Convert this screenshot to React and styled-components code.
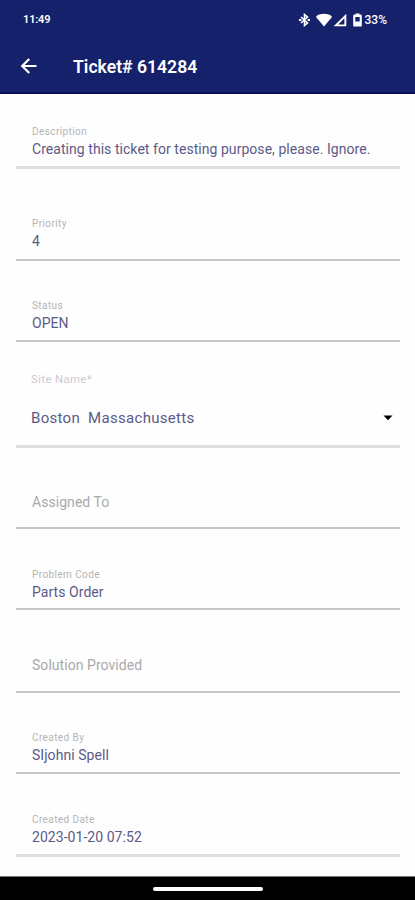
import React from "react";
import styled, { createGlobalStyle } from "styled-components";

const GlobalStyle = createGlobalStyle`
  * { box-sizing: border-box; }
  body { margin: 0; background: #fefefe; font-family: Roboto, "Liberation Sans", sans-serif; }
`;

const Screen = styled.div`
  width: 415px;
  height: 900px;
  display: flex;
  flex-direction: column;
  overflow: hidden;
  background: #fefefe;
`;

const Header = styled.header`
  height: 94px;
  flex: none;
  background: #16216c;
  border-bottom: 2px solid #08105a;
  color: #fff;
`;

const StatusBar = styled.div`
  height: 39px;
  padding: 0 28px 0 23px;
  display: flex;
  align-items: center;
  justify-content: space-between;
  font-size: 11px;
  font-weight: 600;
`;

const Clock = styled.span`
  letter-spacing: -0.15px;
`;

const StatusIcons = styled.div`
  display: flex;
  align-items: center;
  svg { display: block; }
`;

const Percent = styled.span`
  margin-left: 3px;
  font-size: 12px;
  font-weight: 500;
`;

const TitleBar = styled.div`
  height: 54px;
  padding: 0 0 0 20px;
  display: flex;
  align-items: center;
`;

const BackButton = styled.button`
  width: 18px;
  height: 18px;
  padding: 0;
  border: 0;
  background: none;
  color: #fff;
  svg { display: block; }
`;

const Title = styled.h1`
  margin: 2px 0 0 35px;
  font-size: 17.6px;
  font-weight: 600;
  line-height: 24px;
`;

const Form = styled.main`
  flex: 1;
  padding: 0 15px 0 16px;
`;

const Field = styled.div`
  height: ${(p) => p.$height}px;
  padding: 0 0 ${(p) => p.$gap ?? 8}px 16px;
  display: flex;
  flex-direction: column;
  justify-content: flex-end;
  border-bottom: ${(p) => (p.$soft ? "3px solid #dedede" : "2px solid #c6c6c6")};
`;

const Label = styled.label`
  font-size: 10px;
  line-height: 17px;
  letter-spacing: 0.41px;
  color: #b4b4b6;
`;

const Value = styled.div`
  font-size: 14px;
  line-height: 18px;
  letter-spacing: ${(p) => p.$spacing ?? 0.05}px;
  white-space: pre;
  color: #5c5a88;
`;

const Placeholder = styled(Value)`
  color: #a9a9ab;
`;

const SelectLabel = styled(Label)`
  font-size: 11.3px;
  margin: 0 0 20px -1px;
  color: #cbcbcd;
`;

const SelectRow = styled.div`
  display: flex;
  align-items: center;
  justify-content: space-between;
  margin-left: -1px;
  padding-right: 7px;
  ${Value} { font-size: 15px; line-height: 20px; }
`;

const NavBar = styled.footer`
  height: 24px;
  flex: none;
  display: flex;
  justify-content: center;
  align-items: center;
  background: #000;
  border-top: 1px solid #777;
`;

const HomePill = styled.div`
  width: 110px;
  height: 4px;
  border-radius: 2px;
  background: #fff;
`;

const Bluetooth = () => (
  <svg width="13" height="14" viewBox="0 0 13 14" fill="none" stroke="#fff" strokeWidth="1.6">
    <path d="M3 4L9.5 10L6.5 12.5V1.5L9.5 4L3 10" />
    <path d="M1 7h2.4M9.6 7H12" strokeWidth="2" />
  </svg>
);

const Wifi = () => (
  <svg width="16" height="14" viewBox="0 0 16 14" fill="#fff">
    <path d="M0.2 3.4C2.5 0 13.5 0 15.8 3.4Q15.9 4.4 15.2 5L8 13.4L.8 5Q.1 4.4 .2 3.4Z" />
  </svg>
);

const Signal = () => (
  <svg width="14" height="14" viewBox="0 0 14 14">
    <path d="M.7 13.3H13.3V.7ZM11.4 11.4H5.2L11.4 5.2Z" fill="#fff" fillRule="evenodd" />
  </svg>
);

const Battery = () => (
  <svg width="9" height="14" viewBox="0 0 9 14">
    <path
      d="M2.6.5H6.4V1.6H7.6Q8.8 1.6 8.8 2.8V12.4Q8.8 13.6 7.6 13.6H1.4Q.2 13.6 .2 12.4V2.8Q.2 1.6 1.4 1.6H2.6ZM2.3 4V8.5H6.7V4Z"
      fill="#fff"
      fillRule="evenodd"
    />
  </svg>
);

const Spacer = styled.span`
  width: ${(p) => p.$w}px;
`;

const fields = [
  { label: "Description", value: "Creating this ticket for testing purpose, please. Ignore.", height: 75, soft: true },
  { label: "Priority", value: "4", height: 92, gap: 9 },
  { label: "Status", value: "OPEN", height: 81 },
  { select: true, label: "Site Name*", value: "Boston  Massachusetts", height: 106, gap: 17, soft: true },
  { placeholder: "Assigned To", height: 81, gap: 16 },
  { label: "Problem Code", value: "Parts Order", height: 81, gap: 7.5 },
  { placeholder: "Solution Provided", height: 83, gap: 17 },
  { label: "Created By", value: "SIjohni Spell", height: 81 },
  { label: "Created Date", value: "2023-01-20 07:52", height: 82.5, soft: true },
];

function TicketField({ label, value, placeholder, select, height, gap, soft }) {
  return (
    <Field $height={height} $gap={gap} $soft={soft}>
      {select ? (
        <>
          <SelectLabel>{label}</SelectLabel>
          <SelectRow>
            <Value $spacing={0.3}>{value}</Value>
            <svg width="10" height="6" viewBox="0 0 10 6">
              <path d="M0.5 0.5H9.5L5 5.2Z" fill="#000" />
            </svg>
          </SelectRow>
        </>
      ) : placeholder ? (
        <Placeholder>{placeholder}</Placeholder>
      ) : (
        <>
          <Label>{label}</Label>
          <Value>{value}</Value>
        </>
      )}
    </Field>
  );
}

export default function App() {
  return (
    <Screen>
      <GlobalStyle />
      <Header>
        <StatusBar>
          <Clock>11:49</Clock>
          <StatusIcons>
            <Bluetooth />
            <Spacer $w={5} />
            <Wifi />
            <Spacer $w={1} />
            <Signal />
            <Spacer $w={6} />
            <Battery />
            <Percent>33%</Percent>
          </StatusIcons>
        </StatusBar>
        <TitleBar>
          <BackButton aria-label="Back">
            <svg width="18" height="18" viewBox="0 0 18 18" fill="none" stroke="#fff" strokeWidth="2.2">
              <path d="M16.5 9H2.5M9.2 2L2.2 9L9.2 16" />
            </svg>
          </BackButton>
          <Title>Ticket# 614284</Title>
        </TitleBar>
      </Header>
      <Form>
        {fields.map((f) => (
          <TicketField key={f.label || f.placeholder} {...f} />
        ))}
      </Form>
      <NavBar>
        <HomePill />
      </NavBar>
    </Screen>
  );
}
